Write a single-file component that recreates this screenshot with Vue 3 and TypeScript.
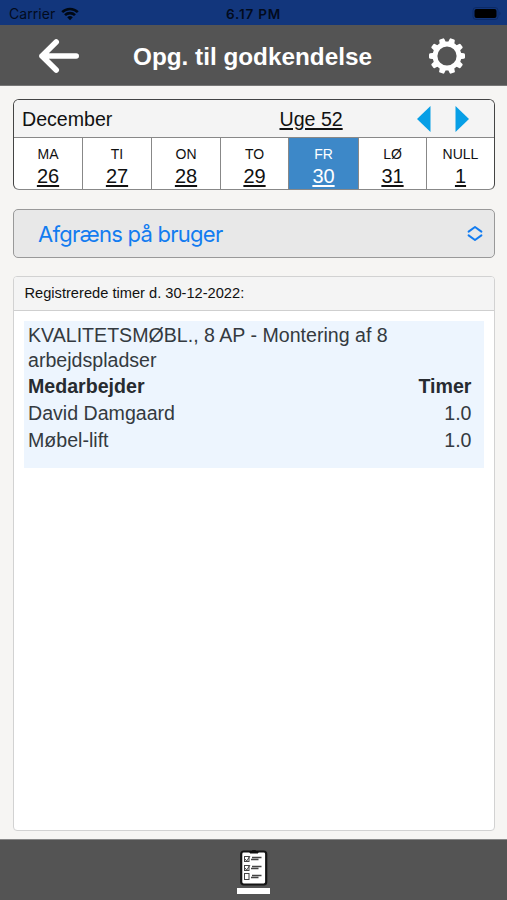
<script setup lang="ts">
interface Day { name: string; date: string; active?: boolean }
interface Entry { employee: string; hours: string }

const days: Day[] = [
  { name: 'MA', date: '26' },
  { name: 'TI', date: '27' },
  { name: 'ON', date: '28' },
  { name: 'TO', date: '29' },
  { name: 'FR', date: '30', active: true },
  { name: 'LØ', date: '31' },
  { name: 'NULL', date: '1' },
]
const entries: Entry[] = [
  { employee: 'David Damgaard', hours: '1.0' },
  { employee: 'Møbel-lift', hours: '1.0' },
]
const teeth: number[] = Array.from({ length: 10 }, (_, i) => i * 36)
</script>

<template>
  <div class="screen">
    <div class="status">
      <div class="carrier">
        <span>Carrier</span>
        <svg class="wifi" width="18" height="14" viewBox="0 0 18 14">
          <path d="M1.2 5.2a11 11 0 0 1 15.6 0" />
          <path d="M4 8.2a7.1 7.1 0 0 1 10 0" />
          <path class="dot" d="M9 13.2 6.2 10.3a4 4 0 0 1 5.6 0z" />
        </svg>
      </div>
      <span class="clock">6.17 PM</span>
      <div class="power">
        <svg width="30" height="13" viewBox="0 0 30 13">
          <rect x="1" y="0.5" width="25" height="12" rx="3" fill="none" stroke="#0c2a66" />
          <rect x="2.5" y="2" width="22" height="9" rx="2" fill="#000" />
          <path d="M27.5 4.5q2 2 0 4z" fill="#0c2a66" />
        </svg>
      </div>
    </div>

    <header class="header">
      <button class="icon-button" aria-label="Tilbage">
        <svg width="42" height="36" viewBox="0 0 42 36">
          <path d="M38.2 18H4M18.2 4 4 18l14.2 14" fill="none" stroke="#fff" stroke-width="5.6" stroke-linecap="round" stroke-linejoin="round" />
        </svg>
      </button>
      <h1>Opg. til godkendelse</h1>
      <button class="icon-button" aria-label="Indstillinger">
        <svg width="36" height="36" viewBox="-18 -18 36 36">
          <circle r="12" fill="none" stroke="#fff" stroke-width="4.8" />
          <path v-for="angle in teeth" :key="angle" d="M12.5 -3.3 16.9 -2.7Q18 -2.5 18 -1.6V1.6Q18 2.5 16.9 2.7L12.5 3.3Z" fill="#fff" :transform="`rotate(${angle})`" />
        </svg>
      </button>
    </header>

    <main class="content">
      <section class="calendar">
        <div class="month">
          <span>December</span>
          <a class="week">Uge 52</a>
          <div class="arrows">
            <svg width="14" height="26" viewBox="0 0 14 26"><path d="M13.5 0v26L0 13z" fill="#079fe6" /></svg>
            <svg width="14" height="26" viewBox="0 0 14 26"><path d="M.5 0v26L14 13z" fill="#079fe6" /></svg>
          </div>
        </div>
        <div class="days">
          <div v-for="day in days" :key="day.name" class="day" :class="{ active: day.active }">
            <span class="name">{{ day.name }}</span>
            <a class="date">{{ day.date }}</a>
          </div>
        </div>
      </section>

      <button class="select">
        <span>Afgræns på bruger</span>
        <svg width="16" height="18" viewBox="0 0 16 18">
          <path d="M1.6 6.6 8 2 14.4 6.6M1.6 10.4 8 15 14.4 10.4" fill="none" stroke="#137cf0" stroke-width="2" stroke-linejoin="round" stroke-linecap="round" />
        </svg>
      </button>

      <section class="panel">
        <h2>Registrerede timer d. 30-12-2022:</h2>
        <article class="task">
          <p>KVALITETSMØBL., 8 AP - Montering af 8 arbejdspladser</p>
          <div class="row strong"><span>Medarbejder</span><span>Timer</span></div>
          <div v-for="entry in entries" :key="entry.employee" class="row">
            <span>{{ entry.employee }}</span><span>{{ entry.hours }}</span>
          </div>
        </article>
      </section>
    </main>

    <footer class="tabs">
      <svg width="28" height="36" viewBox="0 0 28 36">
        <rect x="1.2" y="1.5" width="25" height="33" rx="2.5" fill="#fff" stroke="#151515" stroke-width="2.2" />
        <path d="M10 3V1.8h2.2a1.8 1.8 0 0 1 3.6 0H18V3z" fill="#111" stroke="#111" />
        <g fill="none" stroke="#444">
          <rect x="4.5" y="6.5" width="4.5" height="5" />
          <rect x="4.5" y="15.5" width="4.5" height="5" />
          <rect x="4.5" y="23.5" width="4.5" height="6" />
          <path d="m5 9 1.7 2L10 6M5 18l1.7 2L10 15" />
          <path d="M12 7.5h9.5M11 9.5h7.5M12 16.5h9.5M11 18.5h7.5M12 25.5h9.5M11 27.5h7.5" stroke-width="1.3" />
        </g>
      </svg>
      <div class="indicator"></div>
    </footer>
  </div>
</template>

<style>
body { margin: 0; background: #f6f5f3; }
</style>

<style scoped>
.screen {
  width: 507px;
  height: 900px;
  display: flex;
  flex-direction: column;
  background: #f6f5f3;
  color: #111;
  font-family: "Liberation Sans", Arial, sans-serif;
}
button { margin: 0; padding: 0; border: 0; background: none; font: inherit; }
svg { display: block; }
.status {
  height: 25px;
  box-sizing: border-box;
  padding: 2px 5px 0 9px;
  display: grid;
  grid-template-columns: 1fr auto 1fr;
  align-items: center;
  background: #12367c;
  color: #020b1d;
  font: 14px/20px Inter, sans-serif;
}
.carrier { display: flex; align-items: center; gap: 6px; letter-spacing: 0.05px; }
.wifi path { fill: none; stroke: #000814; stroke-width: 2.6; }
.wifi .dot { fill: #000814; stroke: none; }
.clock { margin-right: 4px; font-size: 13.5px; font-weight: 600; letter-spacing: 0.8px; }
.power { display: flex; justify-content: flex-end; }
.header {
  height: 61px;
  box-sizing: border-box;
  padding: 1px 42px 0 38px;
  display: flex;
  align-items: center;
  justify-content: space-between;
  background: #545454;
  border-bottom: 1px solid #777;
}
h1 { margin: 2px 0 0 -4px; color: #fff; font-size: 24.3px; line-height: 30px; font-weight: 700; }
.content {
  flex: 1;
  padding: 13px 12px 8px 13px;
  display: flex;
  flex-direction: column;
}
.calendar {
  height: 91px;
  box-sizing: border-box;
  border: 1px solid #444;
  border-bottom-color: #888;
  border-radius: 6px;
  overflow: hidden;
  display: flex;
  flex-direction: column;
  background: #fff;
}
.month {
  height: 37px;
  flex-shrink: 0;
  padding: 0 25px 0 8px;
  display: grid;
  grid-template-columns: 257.5px auto 1fr;
  align-items: center;
  background: #f4f4f4;
  border-bottom: 1px solid #888;
  font-size: 19.6px;
  line-height: 24px;
}
.month span, .week { padding-top: 1px; }
.week { text-decoration: underline; text-decoration-thickness: 1.5px; text-underline-offset: 2px; }
.arrows { display: flex; justify-content: flex-end; gap: 24px; }
.days { flex: 1; min-height: 0; display: grid; grid-template-columns: 69px 69px 69px 68px 70px 68px 1fr; }
.day {
  padding-top: 7px;
  display: flex;
  flex-direction: column;
  align-items: center;
  border-right: 1px solid #888;
}
.day:last-child { border-right: 0; }
.name { font-size: 14px; line-height: 18px; }
.date { font-size: 20px; line-height: 27px; text-decoration: underline; text-decoration-thickness: 1.5px; text-underline-offset: 2px; }
.active { background: #3d88c8; color: #fff; }
.select {
  height: 49px;
  margin-top: 19px;
  padding: 0 11px 0 24px;
  box-sizing: border-box;
  display: flex;
  align-items: center;
  justify-content: space-between;
  border: 1px solid #999;
  border-radius: 5px;
  background: #e8e8e8;
  color: #137cf0;
  font: 22px/28px Inter, sans-serif;
  letter-spacing: -0.74px;
}
.panel {
  flex: 1;
  margin-top: 18px;
  border: 1px solid #d2d2d2;
  border-radius: 4px;
  background: #fff;
}
h2 {
  height: 33px;
  margin: 0;
  padding-left: 10.5px;
  background: #f4f4f4;
  border-bottom: 1px solid #cfcfcf;
  border-radius: 3px 3px 0 0;
  font-size: 14.65px;
  line-height: 33px;
  font-weight: 400;
}
.task {
  height: 145px;
  margin: 10px;
  padding: 2px 12.5px 0 4px;
  background: #edf5fe;
  color: #343a40;
  font-size: 19.6px;
}
.task p { margin: 0 0 1px; line-height: 24.5px; }
.row { display: flex; justify-content: space-between; line-height: 27px; }
.strong { color: #272b30; font-weight: 700; }
.tabs {
  height: 61px;
  box-sizing: border-box;
  padding-top: 10px;
  display: flex;
  flex-direction: column;
  align-items: center;
  gap: 2px;
  background: #545454;
  border-top: 1px solid #888;
}
.indicator { width: 33px; height: 6px; background: #fff; }
</style>
